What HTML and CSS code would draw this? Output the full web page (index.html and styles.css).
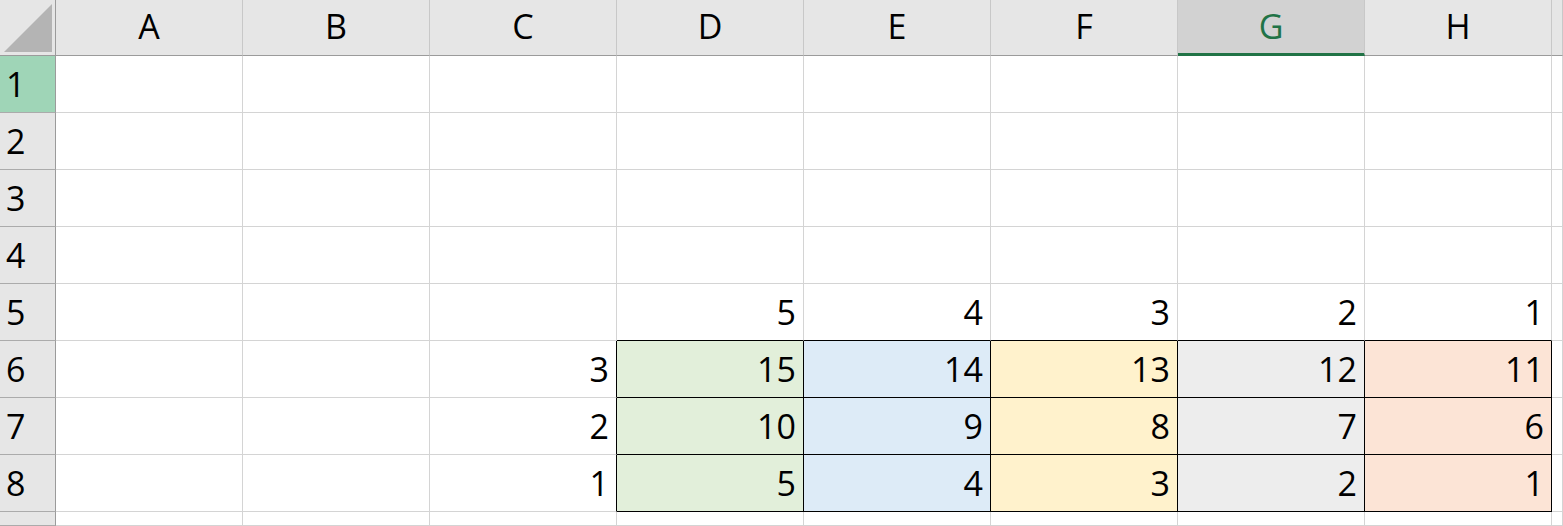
FILE: index.html
```html
<!DOCTYPE html>
<html>
<head>
<meta charset="utf-8">
<link rel="stylesheet" href="styles.css">
</head>
<body>
<div class="sheet">
  <div class="corner"><svg width="48" height="48" viewBox="0 0 48 48"><polygon points="48,0 48,48 0,48" fill="#b4b4b4"/></svg></div>
  <div class="h">A</div><div class="h">B</div><div class="h">C</div><div class="h">D</div><div class="h">E</div><div class="h">F</div><div class="h sel">G</div><div class="h">H</div><div class="h"></div>

  <div class="r rsel">1</div><div class="c"></div><div class="c"></div><div class="c"></div><div class="c"></div><div class="c"></div><div class="c"></div><div class="c"></div><div class="c"></div><div class="c"></div>
  <div class="r">2</div><div class="c"></div><div class="c"></div><div class="c"></div><div class="c"></div><div class="c"></div><div class="c"></div><div class="c"></div><div class="c"></div><div class="c"></div>
  <div class="r">3</div><div class="c"></div><div class="c"></div><div class="c"></div><div class="c"></div><div class="c"></div><div class="c"></div><div class="c"></div><div class="c"></div><div class="c"></div>
  <div class="r">4</div><div class="c"></div><div class="c"></div><div class="c"></div><div class="c"></div><div class="c"></div><div class="c"></div><div class="c"></div><div class="c"></div><div class="c"></div>
  <div class="r">5</div><div class="c"></div><div class="c"></div><div class="c"></div><div class="c bb">5</div><div class="c bb">4</div><div class="c bb">3</div><div class="c bb">2</div><div class="c bb">1</div><div class="c"></div>
  <div class="r">6</div><div class="c"></div><div class="c"></div><div class="c br">3</div><div class="c box f-green">15</div><div class="c box f-blue">14</div><div class="c box f-yellow">13</div><div class="c box f-gray">12</div><div class="c box f-orange">11</div><div class="c"></div>
  <div class="r">7</div><div class="c"></div><div class="c"></div><div class="c br">2</div><div class="c box f-green">10</div><div class="c box f-blue">9</div><div class="c box f-yellow">8</div><div class="c box f-gray">7</div><div class="c box f-orange">6</div><div class="c"></div>
  <div class="r">8</div><div class="c"></div><div class="c"></div><div class="c br">1</div><div class="c box f-green">5</div><div class="c box f-blue">4</div><div class="c box f-yellow">3</div><div class="c box f-gray">2</div><div class="c box f-orange">1</div><div class="c"></div>
  <div class="r"></div><div class="c"></div><div class="c"></div><div class="c"></div><div class="c"></div><div class="c"></div><div class="c"></div><div class="c"></div><div class="c"></div><div class="c"></div>
</div>
</body>
</html>
```
FILE: styles.css
```css
* { box-sizing: border-box; }
html, body {
  margin: 0;
  padding: 0;
  width: 1563px;
  height: 526px;
  overflow: hidden;
  background: #ffffff;
}
.sheet {
  display: grid;
  width: 1563px;
  height: 526px;
  overflow: hidden;
  grid-template-columns: 56px repeat(8, 187px) 1fr;
  grid-template-rows: 56px repeat(8, 57px) 1fr;
  font-family: "Open Sans", "Noto Sans", sans-serif;
  font-size: 34px;
  line-height: 1;
  color: #000;
}
.sheet > div { min-width: 0; min-height: 0; }
.corner {
  background: #e6e6e6;
  border-right: 1px solid #9b9b9b;
  border-bottom: 1px solid #9b9b9b;
  padding: 4px 0 0 4px;
}
.corner svg { display: block; }
.h {
  background: #e6e6e6;
  border-right: 1px solid #c8c8c8;
  border-bottom: 1px solid #9b9b9b;
  display: flex;
  align-items: flex-end;
  justify-content: center;
  padding-bottom: 12px;
}
.h.sel {
  background: #d2d2d2;
  color: #217346;
  border-bottom: 3px solid #217346;
  padding-bottom: 10px;
}
.r {
  background: #e6e6e6;
  border-right: 1px solid #9b9b9b;
  border-bottom: 1px solid #ababab;
  display: flex;
  align-items: flex-end;
  padding: 0 0 11px 6px;
}
.r.rsel { background: #9fd5b7; }
.c {
  border-right: 1px solid #d4d4d4;
  border-bottom: 1px solid #d4d4d4;
  display: flex;
  align-items: flex-end;
  justify-content: flex-end;
  padding: 0 7px 11px 0;
}
.c.bb { border-bottom-color: #000; }
.c.br { border-right-color: #000; }
.c.box { border-right-color: #000; border-bottom-color: #000; }
.f-green { background: #e2efda; }
.f-blue { background: #ddebf7; }
.f-yellow { background: #fff2cc; }
.f-gray { background: #ededed; }
.f-orange { background: #fce4d6; }
```
